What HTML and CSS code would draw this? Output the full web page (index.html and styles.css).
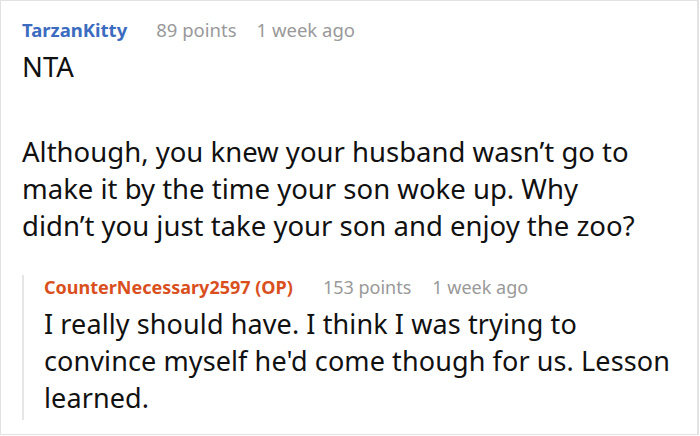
FILE: index.html
```html
<!DOCTYPE html>
<html>
<head>
<meta charset="utf-8">
<link rel="stylesheet" href="styles.css">
</head>
<body>
<div class="frame">
  <div class="comment">
    <div class="meta">
      <span class="author blue">TarzanKitty</span>
      <span class="info">89 points</span>
      <span class="info">1 week ago</span>
    </div>
    <div class="body main">
      <p>NTA</p>
      <p class="para">Although, you knew your husband wasn’t go to make it by the time your son woke up. Why didn’t you just take your son and enjoy the zoo?</p>
    </div>
    <div class="reply">
      <div class="meta reply-meta">
        <span class="author orange">CounterNecessary2597 (OP)</span>
        <span class="info">153 points</span>
        <span class="info">1 week ago</span>
      </div>
      <div class="body sub">
        <p>I really should have. I think I was trying to convince myself he'd come though for us. Lesson learned.</p>
      </div>
    </div>
  </div>
</div>
</body>
</html>
```
FILE: styles.css
```css
html, body {
  margin: 0;
  padding: 0;
  background: #fff;
}
.frame {
  width: 699px;
  height: 435px;
  box-sizing: border-box;
  border: 1px solid #e2e2e2;
  border-right-width: 2px;
  overflow: hidden;
  font-family: "Noto Sans", sans-serif;
  color: #111;
}
.comment {
  padding: 17px 6px 0 21px;
}
.meta {
  display: flex;
  gap: 20px;
  font-size: 18.5px;
  line-height: 24px;
  margin-bottom: 6px;
}
.author {
  font-weight: 700;
  margin-right: 9px;
}
.blue { color: #3b6cbf; }
.orange { color: #d9501e; }
.info { color: #999; }
.body p {
  margin: 0;
}
.main {
  font-size: 27.5px;
  line-height: 37px;
  padding-right: 40px;
}
.main .para {
  margin-top: 48px;
}
.reply {
  margin-top: 31px;
  border-left: 2px solid #e6e6e6;
  padding-left: 20px;
  padding-bottom: 4px;
}
.reply-meta {
  font-size: 18px;
  gap: 21px;
}
.sub {
  font-size: 27px;
  line-height: 37px;
  letter-spacing: 0.1px;
}
```
